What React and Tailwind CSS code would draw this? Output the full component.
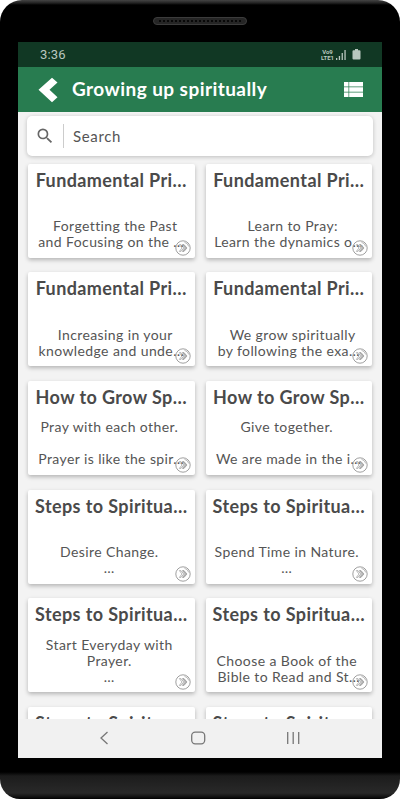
import { MdSearch } from "react-icons/md";

const cards = [
  { title: "Fundamental Pri…", lines: ["", "  Forgetting the Past", "and Focusing on the …"] },
  { title: "Fundamental Pri…", lines: ["", "    Learn to Pray:  ", "Learn the dynamics o…"] },
  { title: "Fundamental Pri…", lines: ["", "  Increasing in your", "knowledge and unde…"] },
  { title: "Fundamental Pri…", lines: ["", "  We grow spiritually", "by following the exa…"] },
  { title: "How to Grow Sp…", lines: ["Pray with each other. ", "", "Prayer is like the spir…"] },
  { title: "How to Grow Sp…", lines: ["Give together. ", "", "We are made in the i…"] },
  { title: "Steps to Spiritua…", lines: ["", "Desire Change. ", "… "] },
  { title: "Steps to Spiritua…", lines: ["", "Spend Time in Nature. ", "… "] },
  { title: "Steps to Spiritua…", lines: ["Start Everyday with ", "Prayer. ", "… "] },
  { title: "Steps to Spiritua…", lines: ["", "Choose a Book of the ", "Bible to Read and St…"] },
  { title: "Steps to Spiritua…", lines: ["", "", ""] },
  { title: "Steps to Spiritua…", lines: ["", "", ""] },
];

function MoreIcon() {
  return (
    <svg className="absolute right-1 bottom-[2px] h-4 w-4" viewBox="0 0 16 16" fill="none" stroke="#888">
      <circle cx="8" cy="8" r="7.2" strokeWidth="0.8" />
      <path d="M9.5 2.3 A6 6 0 0 1 13.8 6.5" strokeWidth="0.6" />
      <path d="M4.4 4.6 H5.9 L8.8 8 L5.9 11.4 H4.4 L7 8 Z" strokeWidth="0.6" />
      <path d="M7.4 4.6 H9 L12 8 L9 11.4 H7.4 L10.2 8 Z" strokeWidth="0.6" fill="#bbb" />
    </svg>
  );
}

function Card({ title, lines }) {
  return (
    <div className="relative h-[94px] rounded-[2px] bg-white pt-[5px] text-center shadow-[0_2px_4px_rgba(0,0,0,0.26)]">
      <h2 className="text-[18px] leading-[23px] font-bold tracking-[0.4px] whitespace-pre text-[#4a4a4a]">{title}</h2>
      <div className="mt-[10.500px] text-[14px] leading-4 tracking-[0.4px] text-[#555]">
        {lines.map((line, i) => (
          <p key={i} className="flex h-4 justify-center whitespace-pre">{line}</p>
        ))}
      </div>
      <MoreIcon />
    </div>
  );
}

function StatusBar() {
  return (
    <div className="flex h-[25px] shrink-0 items-center justify-between bg-[#113824] pr-[21px] pl-[22px] text-[#b9c7bf]">
      <span className="font-[Roboto,sans-serif] text-[13px] tracking-[0.2px]">3:36</span>
      <div className="flex items-center">
        <div className="mr-[2px] text-center font-[Roboto,sans-serif] text-[6px] leading-[6px] font-bold">
          <p>Vo9</p>
          <p>LTE1</p>
        </div>
        <svg className="mr-[6px] h-[10px] w-[10px]" viewBox="0 0 10 10" fill="currentColor">
          <rect x="0" y="8" width="1.3" height="2" />
          <rect x="2.8" y="6" width="1.3" height="4" />
          <rect x="5.6" y="3" width="1.3" height="7" />
          <rect x="8.4" y="0" width="1.3" height="10" />
        </svg>
        <svg className="h-[11px] w-[9px]" viewBox="0 0 9 11" fill="currentColor">
          <path d="M3 0h3v1.2h1.5a1 1 0 0 1 1 1v7.3a1 1 0 0 1-1 1h-6a1 1 0 0 1-1-1V2.200a1 1 0 0 1 1-1H3z" />
        </svg>
      </div>
    </div>
  );
}

function Header() {
  return (
    <div className="flex h-[45px] shrink-0 items-center bg-[#287c50] text-white">
      <svg className="ml-5 h-[26px] w-5" viewBox="0 0 20 26" fill="currentColor">
        <path d="M14 0.800 L19.500 5.500 L11.500 12.800 L19.500 20.300 L14 25.200 L0.500 12.800 Z" />
      </svg>
      <h1 className="ml-[14px] flex-1 text-[19px] font-bold tracking-[0.44px] whitespace-nowrap">Growing up spiritually</h1>
      <svg className="mr-[19px] h-[15px] w-[19px]" viewBox="0 0 19 15" fill="currentColor">
        <path d="M0 0h4.500v4.400H0zM5.200 0H19v4.400H5.200zM0 5.300h4.500v4.400H0zM5.200 5.300H19v4.400H5.200zM0 10.600h4.500V15H0zM5.200 10.600H19V15H5.200z" />
      </svg>
    </div>
  );
}

function NavBar() {
  return (
    <div className="h-[39px] shrink-0 bg-[#f1f1f1]">
      <svg className="h-[39px] w-[364px]" viewBox="0 0 364 39" fill="none" stroke="#777" strokeWidth="1.3">
        <path d="M89.500 13 L83 19 L89.500 25" />
        <rect x="173.700" y="13.200" width="13" height="11.600" rx="3.500" />
        <path d="M269.700 13v12M275.200 13v12M280.700 13v12" />
      </svg>
    </div>
  );
}

function App() {
  return (
    <div className="h-[800px] w-[400px] overflow-hidden bg-white font-[Lato,sans-serif]">
      <div className="flex h-[799px] flex-col items-center rounded-t-[22px] rounded-b-[20px] bg-[linear-gradient(#444_0px,#222_3px,#000_5px,#000_772px,#1c1c1c_776px,#292929_793px,#111_797px,#000_799px)]">
        {/* speaker */}
        <div className="mt-[17px] mb-[17px] flex h-2 w-[94px] shrink-0 items-center rounded-full border border-[#3c3c3c] bg-[#252525] px-1">
          <div className="h-1 w-full bg-[radial-gradient(circle,#080808_1px,transparent_1.300px)] bg-[length:4px_4px]" />
        </div>

        <div className="flex h-[716px] w-[364px] shrink-0 flex-col overflow-hidden bg-[#f3f3f3]">
          <StatusBar />
          <Header />

          <div className="flex min-h-0 flex-1 flex-col overflow-hidden pt-1">
            <div className="ml-[9px] flex h-10 w-[346px] shrink-0 items-center rounded-[5px] bg-white shadow-[0_1px_4px_rgba(0,0,0,0.22)]">
              <MdSearch className="ml-2 h-5 w-5 text-[#666]" />
              <div className="ml-2 h-6 w-px bg-[#ccc]" />
              <span className="ml-[9px] text-[15px] tracking-[0.65px] text-[#555]">Search</span>
            </div>

            <div className="mt-[7.600px] ml-[10px] grid w-[344px] grid-cols-2 gap-x-[11px] gap-y-[14.700px]">
              {cards.map((card, i) => (
                <Card key={i} title={card.title} lines={card.lines} />
              ))}
            </div>
          </div>

          <NavBar />
        </div>
      </div>
    </div>
  );
}

export default App;
